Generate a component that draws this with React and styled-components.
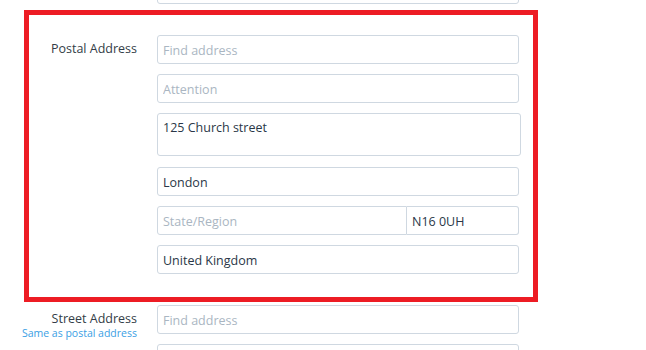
import React from 'react'
import styled, { createGlobalStyle } from 'styled-components'

const Global = createGlobalStyle`
  body {
    margin: 0;
    background: #fff;
    font-family: "Open Sans", "Liberation Sans", sans-serif;
    color: #333d47;
  }
`

function App() {
  return (
    <Page>
      <Global />
      <Row>
        <Label />
        <Field><Input $cut /></Field>
      </Row>

      <Highlight>
        <Row $label={108}>
          <Label>Postal Address</Label>
          <Field>
            <Input placeholder="Find address" />
            <Input placeholder="Attention" />
            <TextArea defaultValue="125 Church street" />
            <Input defaultValue="London" />
            <Group>
              <Input placeholder="State/Region" $grow $side="left" />
              <Input defaultValue="N16 0UH" $w={112} $side="right" />
            </Group>
            <Input defaultValue="United Kingdom" />
          </Field>
        </Row>
      </Highlight>

      <Row>
        <Label>
          Street Address
          <LinkText>Same as postal address</LinkText>
        </Label>
        <Field>
          <Input placeholder="Find address" />
          <Input placeholder="Attention" />
        </Field>
      </Row>
    </Page>
  )
}

export default App

const Page = styled.div`
  width: 646px;
  height: 350px;
  overflow: hidden;
`

const Row = styled.div`
  display: grid;
  grid-template-columns: ${p => p.$label || 137}px 362px;
  column-gap: 20px;
  align-items: start;
`

const Label = styled.div`
  font-size: 12.5px;
  line-height: 16px;
  text-align: right;
  padding-top: 6px;
  color: #333d47;
  display: flex;
  flex-direction: column;
  align-items: flex-end;
`

const LinkText = styled.span`
  font-size: 10.5px;
  line-height: 13px;
  color: #3aa0e4;
`

const Field = styled.div`
  display: flex;
  flex-direction: column;
  gap: 10px;
`

const Highlight = styled.div`
  width: 490px;
  margin: 4px 0 3px 24px;
  padding: 20px 14px 23px 0;
  border: 5px solid #ed1c24;
`

const Input = styled.input`
  box-sizing: border-box;
  height: 29px;
  width: ${p => (p.$w ? p.$w + 'px' : '100%')};
  flex: ${p => (p.$grow ? '1' : 'none')};
  margin: 0;
  margin-top: ${p => (p.$cut ? '-25px' : '0')};
  padding: 1px 5px 0;
  border: 1px solid #cfd8e1;
  border-radius: ${p => (p.$side === 'left' ? '3px 0 0 3px' : p.$side === 'right' ? '0 3px 3px 0' : '3px')};
  border-left-width: ${p => (p.$side === 'right' ? '0' : '1px')};
  font-family: "Open Sans", "Liberation Sans", sans-serif;
  font-size: 12.5px;
  color: #2a3747;
  outline: none;
  &::placeholder {
    color: #aab6c2;
  }
`

const TextArea = styled.textarea`
  box-sizing: border-box;
  display: block;
  width: 364px;
  height: 43px;
  margin: 0 0 1px;
  padding: 6px 5px 5px;
  border: 1px solid #cfd8e1;
  border-radius: 3px;
  font-family: "Open Sans", "Liberation Sans", sans-serif;
  font-size: 12.5px;
  line-height: 16px;
  color: #2a3747;
  resize: none;
  outline: none;
`

const Group = styled.div`
  display: flex;
`
